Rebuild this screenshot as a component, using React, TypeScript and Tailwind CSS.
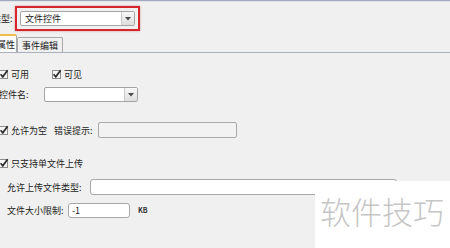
import type { ReactNode } from 'react'

function CheckBox() {
  return (
    <svg className="block shrink-0" width="10" height="10" viewBox="0 0 10 10">
      <rect x="0.5" y="1.5" width="8" height="8" fill="#f6f6f6" stroke="#8e8e8e" />
      <path d="M1.6 5.2 L3.8 7.8 L8.6 1.2" fill="none" stroke="#2b2b2b" strokeWidth="1.7" />
    </svg>
  )
}

function ArrowButton() {
  return (
    <div className="flex h-full w-[13px] items-center justify-center border-l border-[#c9c9c9] bg-gradient-to-b from-[#f7f7f7] to-[#dedede]">
      <svg width="6" height="4" viewBox="0 0 6 4">
        <path d="M0 0 L6 0 L3 3.5 Z" fill="#4a4a4a" />
      </svg>
    </div>
  )
}

function CheckItem({ children, className = '' }: { children: ReactNode; className?: string }) {
  return (
    <div className={`flex items-center gap-[2px] ${className}`}>
      <CheckBox />
      <span>{children}</span>
    </div>
  )
}

export default function App() {
  return (
    <div className="relative h-[248px] w-[450px] overflow-hidden bg-[#f0f0f0] font-['Noto_Sans_CJK_SC','Liberation_Sans',sans-serif] text-[9px] leading-none text-[#1c1c1c]">
      <div className="h-px bg-[#a3a9ba]" />
      <div className="h-px bg-[#dfe3ea]" />

      {/* 类型 */}
      <div className="mt-[4px] flex h-[25px] items-center">
        <span className="-ml-[8px] w-[23px] shrink-0">类型:</span>
        <div className="border-2 border-[#d4262c] px-[3px] py-[3px] shadow-[0_0_2px_rgba(200,40,40,0.45)]">
          <div className="flex h-[15px] w-[115px] items-center rounded-[2px] border border-[#a5a5a5] bg-white">
            <span className="flex-1 pl-[4px]">文件控件</span>
            <ArrowButton />
          </div>
        </div>
      </div>

      {/* tabs */}
      <div className="mt-[4px] flex h-[18px] items-end border-b border-[#aab0bd]">
        <div className="-ml-[8px] flex h-[18px] w-[25px] items-center rounded-t-[2px] border border-b-0 border-[#a8a8a8] border-t-2 border-t-[#f0bd4a] bg-[#fafafa] pl-[4px]">
          属性
        </div>
        <div className="flex h-[15px] w-[46px] items-center rounded-t-[2px] border border-b-0 border-[#a8a8a8] bg-[#f0f0f0] pl-[4px]">
          事件编辑
        </div>
      </div>

      {/* 可用 / 可见 */}
      <div className="mt-[16px] flex h-[10px] items-center">
        <CheckItem className="-ml-[1px]">可用</CheckItem>
        <CheckItem className="ml-[23px]">可见</CheckItem>
      </div>

      {/* 控件名 */}
      <div className="mt-[8px] flex h-[15px] items-center">
        <span className="-ml-[1px] w-[45px] shrink-0">控件名:</span>
        <div className="flex h-[15px] w-[94px] items-center rounded-[2px] border border-[#a5a5a5] bg-white">
          <span className="flex-1" />
          <ArrowButton />
        </div>
      </div>

      {/* 允许为空 */}
      <div className="mt-[20px] flex h-[16px] items-center">
        <CheckItem className="-ml-[1px]">允许为空</CheckItem>
        <span className="ml-[7px] w-[44px] shrink-0">错误提示:</span>
        <div className="h-[16px] w-[139px] rounded-[2px] border border-[#aaaaaa] bg-[#f2f2f2]" />
      </div>

      {/* 只支持单文件上传 */}
      <div className="mt-[20px] flex h-[10px] items-center">
        <CheckItem className="-ml-[1px]">只支持单文件上传</CheckItem>
      </div>

      {/* 允许上传文件类型 */}
      <div className="mt-[11px] flex h-[16px] items-center">
        <span className="ml-[7px] w-[83px] shrink-0">允许上传文件类型:</span>
        <div className="h-[16px] w-[307px] rounded-[3px] border border-[#a8a8a8] bg-white" />
      </div>

      {/* 文件大小限制 */}
      <div className="mt-[8px] flex h-[15px] items-center">
        <span className="ml-[7px] w-[61px] shrink-0">文件大小限制:</span>
        <div className="flex h-[15px] w-[62px] items-center rounded-[3px] border border-[#a8a8a8] bg-white pl-[3px]">
          -1
        </div>
        <span className="ml-[8px] text-[7px] font-bold text-[#333]">KB</span>
      </div>

      {/* watermark */}
      <div className="absolute bottom-0 left-[315px] right-0 top-[181px] bg-white pl-[5px] pt-[14px]">
        <span className="text-[31px] font-light leading-none text-[#c6c6c6]">软件技巧</span>
      </div>
    </div>
  )
}
